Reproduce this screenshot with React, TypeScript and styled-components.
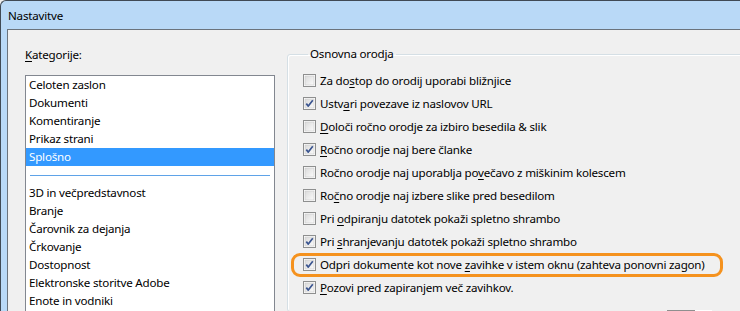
import React from "react";
import styled, { createGlobalStyle, css } from "styled-components";

const GlobalStyle = createGlobalStyle`
  html, body {
    margin: 0;
    padding: 0;
    overflow: hidden;
    background: #f0f0f0;
  }
  body {
    font-family: "Noto Sans", "Open Sans", sans-serif;
    font-size: 11.6px;
    letter-spacing: -0.2px;
    color: #000;
  }
`;

const Window = styled.div`
  width: 780px;
  height: 360px;
  background: #b9d9f7;
  border-top: 1px solid #404a55;
  border-left: 1px solid #404a55;
  border-top-left-radius: 6px;
  padding-left: 6px;
  display: flex;
  flex-direction: column;
  overflow: hidden;
`;

const TitleBar = styled.div`
  flex: 0 0 28px;
  height: 28px;
  display: flex;
  align-items: center;
  padding-left: 1px;
`;

const Content = styled.div`
  flex: 1;
  min-height: 0;
  background: #f0f0f0;
  border-top: 1px solid #6b737c;
  border-left: 1px solid #6b737c;
  display: flex;
  align-items: flex-start;
  gap: 12px;
  padding: 17px 0 0 17px;
`;

const LeftColumn = styled.div`
  width: 250px;
  flex: 0 0 250px;
  display: flex;
  flex-direction: column;
`;

const FieldLabel = styled.div`
  line-height: 16px;
  height: 16px;
  margin-bottom: 12px;
`;

const Mn = styled.span`
  text-decoration: underline;
  text-underline-offset: 2px;
`;

const ListBox = styled.div`
  border: 1px solid #828790;
  background: #fff;
  height: 300px;
`;

const ListItem = styled.div<{ $selected?: boolean }>`
  height: 18px;
  line-height: 18px;
  padding-left: 3px;
  white-space: nowrap;
  ${(p) =>
    p.$selected &&
    css`
      background: #3399ff;
      color: #fff;
    `}
`;

const Separator = styled.div`
  height: 18px;
  display: flex;
  align-items: center;
  padding: 0 4px;
  &::before {
    content: "";
    flex: 1;
    height: 1px;
    background: #5fa3e8;
  }
`;

const Group = styled.fieldset`
  margin: -1px 0 0 0;
  width: 480px;
  flex: 0 0 auto;
  border: 1px solid #d5dfe5;
  border-radius: 3px;
  padding: 7px 0 0 15px;
  box-shadow: inset 1px 1px 0 #fff;
`;

const Legend = styled.legend`
  line-height: 16px;
  padding: 0 2px;
  margin-left: 5px;
`;

const Row = styled.div<{ $highlight?: boolean }>`
  position: relative;
  height: 23px;
  display: flex;
  align-items: center;
  white-space: nowrap;
  ${(p) =>
    p.$highlight &&
    css`
      &::after {
        content: "";
        position: absolute;
        left: -12px;
        top: 0;
        width: 432px;
        height: 24px;
        box-sizing: border-box;
        border: 3px solid #f5921e;
        border-radius: 9px;
      }
    `}
`;

const RowText = styled.span`
  margin-left: 4px;
`;

const FooterEdge = styled.div`
  margin: 11px 0 0 364px;
  display: flex;
  height: 1px;
`;

const EdgePart = styled.div<{ $w: number; $c: string }>`
  width: ${(p) => p.$w}px;
  background: ${(p) => p.$c};
`;

function CheckBox({ checked }: { checked: boolean }) {
  return (
    <svg width="13" height="13" viewBox="0 0 13 13">
      <defs>
        <linearGradient id="cbg" x1="0" y1="0" x2="1" y2="1">
          <stop offset="0" stopColor="#dadada" />
          <stop offset="1" stopColor="#fbfbfb" />
        </linearGradient>
      </defs>
      <rect x="0.5" y="0.5" width="12" height="12" fill="#fff" stroke="#8e8f8f" />
      <rect x="2" y="2" width="9" height="9" fill="url(#cbg)" stroke="#c8c8c8" strokeWidth="0.6" />
      {checked && (
        <path d="M3.3 6.6 L5.3 9.1 L9.8 3.2" fill="none" stroke="#3b5590" strokeWidth="1.7" strokeLinejoin="round" />
      )}
    </svg>
  );
}

type Opt = { before: string; mn: string; after: string; checked: boolean; highlight?: boolean };

const options: Opt[] = [
  { before: "Za do", mn: "s", after: "top do orodij uporabi bližnjice", checked: false },
  { before: "Ustv", mn: "a", after: "ri povezave iz naslovov URL", checked: true },
  { before: "", mn: "D", after: "oloči ročno orodje za izbiro besedila & slik", checked: false },
  { before: "", mn: "R", after: "očno orodje naj bere članke", checked: true },
  { before: "Ročno orodje naj uporablja po", mn: "v", after: "ečavo z miškinim kolescem", checked: false },
  { before: "Ro", mn: "č", after: "no orodje naj izbere slike pred besedilom", checked: false },
  { before: "Pri ", mn: "o", after: "dpiranju datotek pokaži spletno shrambo", checked: false },
  { before: "Pri ", mn: "s", after: "hranjevanju datotek pokaži spletno shrambo", checked: true },
  {
    before: "Odpri dokumente kot nove ",
    mn: "z",
    after: "avihke v istem oknu (zahteva ponovni zagon)",
    checked: true,
    highlight: true,
  },
  { before: "", mn: "P", after: "ozovi pred zapiranjem več zavihkov.", checked: true },
];

const topItems = ["Celoten zaslon", "Dokumenti", "Komentiranje", "Prikaz strani", "Splošno"];
const restItems = [
  "3D in večpredstavnost",
  "Branje",
  "Čarovnik za dejanja",
  "Črkovanje",
  "Dostopnost",
  "Elektronske storitve Adobe",
  "Enote in vodniki",
];

export default function App() {
  return (
    <>
      <GlobalStyle />
      <Window>
        <TitleBar>Nastavitve</TitleBar>
        <Content>
          <LeftColumn>
            <FieldLabel>
              <Mn>K</Mn>ategorije:
            </FieldLabel>
            <ListBox>
              {topItems.map((t) => (
                <ListItem key={t} $selected={t === "Splošno"}>
                  {t}
                </ListItem>
              ))}
              <Separator />
              {restItems.map((t) => (
                <ListItem key={t}>{t}</ListItem>
              ))}
            </ListBox>
          </LeftColumn>
          <Group>
            <Legend>Osnovna orodja</Legend>
            {options.map((o, i) => (
              <Row key={i} $highlight={o.highlight}>
                <CheckBox checked={o.checked} />
                <RowText>
                  {o.before}
                  <Mn>{o.mn}</Mn>
                  {o.after}
                </RowText>
              </Row>
            ))}
            <FooterEdge>
              <EdgePart $w={28} $c="#8f8f8f" />
              <EdgePart $w={17} $c="#ffffff" />
            </FooterEdge>
          </Group>
        </Content>
      </Window>
    </>
  );
}
